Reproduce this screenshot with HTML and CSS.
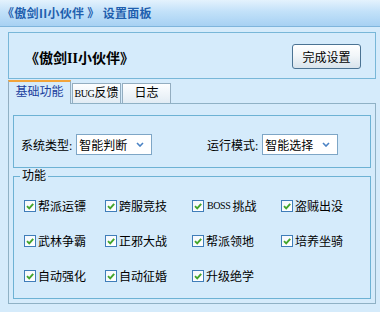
FILE: index.html
```html
<!DOCTYPE html>
<html lang="zh">
<head>
<meta charset="utf-8">
<title>设置面板</title>
<link rel="stylesheet" href="styles.css">
</head>
<body>
<div class="titlebar">《傲剑II小伙伴 》 设置面板</div>
<div class="main">
  <div class="header">
    <div class="brand">《傲剑II小伙伴》</div>
    <button class="btn">完成设置</button>
  </div>
  <div class="tabs">
    <div class="tab active">基础功能</div>
    <div class="tab"><span class="en">BUG</span>反馈</div>
    <div class="tab">日志</div>
  </div>
  <div class="pane">
    <div class="group">
      <div class="field first">
        <span class="label">系统类型:</span>
        <div class="select"><span>智能判断</span><svg class="chev" viewBox="0 0 8 5" width="8" height="5"><path d="M1 1L4 4L7 1" fill="none" stroke="#4a82c4" stroke-width="1.6"/></svg></div>
      </div>
      <div class="field">
        <span class="label">运行模式:</span>
        <div class="select"><span>智能选择</span><svg class="chev" viewBox="0 0 8 5" width="8" height="5"><path d="M1 1L4 4L7 1" fill="none" stroke="#4a82c4" stroke-width="1.6"/></svg></div>
      </div>
    </div>
    <fieldset class="features">
      <legend>功能</legend>
      <div class="grid">
        <label class="cb"><span class="box"><svg viewBox="0 0 10 10" width="10" height="10"><path d="M2 5.2L4.2 7.4L8.2 2.8" fill="none" stroke="#43a52c" stroke-width="1.9"/></svg></span>帮派运镖</label>
        <label class="cb"><span class="box"><svg viewBox="0 0 10 10" width="10" height="10"><path d="M2 5.2L4.2 7.4L8.2 2.8" fill="none" stroke="#43a52c" stroke-width="1.9"/></svg></span>跨服竞技</label>
        <label class="cb"><span class="box"><svg viewBox="0 0 10 10" width="10" height="10"><path d="M2 5.2L4.2 7.4L8.2 2.8" fill="none" stroke="#43a52c" stroke-width="1.9"/></svg></span><span class="en">BOSS</span>挑战</label>
        <label class="cb"><span class="box"><svg viewBox="0 0 10 10" width="10" height="10"><path d="M2 5.2L4.2 7.4L8.2 2.8" fill="none" stroke="#43a52c" stroke-width="1.9"/></svg></span>盗贼出没</label>
        <label class="cb"><span class="box"><svg viewBox="0 0 10 10" width="10" height="10"><path d="M2 5.2L4.2 7.4L8.2 2.8" fill="none" stroke="#43a52c" stroke-width="1.9"/></svg></span>武林争霸</label>
        <label class="cb"><span class="box"><svg viewBox="0 0 10 10" width="10" height="10"><path d="M2 5.2L4.2 7.4L8.2 2.8" fill="none" stroke="#43a52c" stroke-width="1.9"/></svg></span>正邪大战</label>
        <label class="cb"><span class="box"><svg viewBox="0 0 10 10" width="10" height="10"><path d="M2 5.2L4.2 7.4L8.2 2.8" fill="none" stroke="#43a52c" stroke-width="1.9"/></svg></span>帮派领地</label>
        <label class="cb"><span class="box"><svg viewBox="0 0 10 10" width="10" height="10"><path d="M2 5.2L4.2 7.4L8.2 2.8" fill="none" stroke="#43a52c" stroke-width="1.9"/></svg></span>培养坐骑</label>
        <label class="cb"><span class="box"><svg viewBox="0 0 10 10" width="10" height="10"><path d="M2 5.2L4.2 7.4L8.2 2.8" fill="none" stroke="#43a52c" stroke-width="1.9"/></svg></span>自动强化</label>
        <label class="cb"><span class="box"><svg viewBox="0 0 10 10" width="10" height="10"><path d="M2 5.2L4.2 7.4L8.2 2.8" fill="none" stroke="#43a52c" stroke-width="1.9"/></svg></span>自动征婚</label>
        <label class="cb"><span class="box"><svg viewBox="0 0 10 10" width="10" height="10"><path d="M2 5.2L4.2 7.4L8.2 2.8" fill="none" stroke="#43a52c" stroke-width="1.9"/></svg></span>升级绝学</label>
      </div>
    </fieldset>
  </div>
</div>
</body>
</html>
```
FILE: styles.css
```css
* { box-sizing: border-box; }
body {
  margin: 0;
  width: 380px;
  height: 312px;
  overflow: hidden;
  background: #d5ebfb;
  font-family: "Liberation Serif", "Noto Sans CJK SC", serif;
  font-size: 12px;
  color: #000;
}
.titlebar {
  height: 27px;
  line-height: 26px;
  padding-left: 2px;
  border-bottom: 1px solid #7fb5dc;
  background: linear-gradient(#e4f2fd, #c2e1f9 45%, #a7d1f3);
  color: #1f5fae;
  font-weight: bold;
  font-family: "Noto Sans CJK SC", sans-serif;
  letter-spacing: 0.3px;
}
.main { padding: 5px 4px 0 8px; }
.header {
  height: 47px;
  border: 1px solid #78b7d8;
  display: flex;
  align-items: center;
  justify-content: space-between;
  padding: 0 14px 0 16px;
}
.brand {
  font-size: 14px;
  font-weight: bold;
  padding-top: 3px;
}
.btn {
  width: 69px;
  height: 25px;
  padding: 0;
  margin-top: 2px;
  border: 1px solid #4b7393;
  border-radius: 3px;
  background: linear-gradient(#ffffff, #f2f6f9 45%, #d8e3ec);
  font: 12px "Noto Sans CJK SC", sans-serif;
  color: #000;
}
.tabs {
  display: flex;
  align-items: flex-end;
  gap: 1px;
  height: 23px;
  margin-top: 1px;
  position: relative;
  z-index: 1;
}
.tab {
  width: 49px;
  height: 20px;
  border: 1px solid #93adc0;
  border-bottom: none;
  background: linear-gradient(#fdfeff, #e2ecf4);
  text-align: center;
  line-height: 19px;
  white-space: nowrap;
}
.tab.active {
  width: 63px;
  height: 24px;
  margin-bottom: -1px;
  border-top: 2px solid #f2a43a;
  background: #d5ebfb;
  color: #1b3f9e;
  line-height: 21px;
}
.en {
  font-size: 10px;
  letter-spacing: -0.4px;
}
.pane {
  border: 1px solid #8fb1c5;
  padding: 11px 4px 4px 4px;
}
.group {
  height: 53px;
  border: 1px solid #6db2d4;
  display: flex;
  align-items: center;
  padding: 6px 0 0 7px;
}
.field { display: flex; align-items: center; }
.field.first { width: 186px; }
.label { margin-right: 4px; }
.select {
  width: 76px;
  height: 21px;
  border: 1px solid #7ea6c6;
  background: #fff;
  display: flex;
  align-items: center;
  justify-content: space-between;
  padding: 0 7px 0 2px;
}
.chev { display: block; }
.features {
  margin: 0;
  padding: 0 0 5px 0;
  border: 1px solid #6db2d4;
  min-width: 0;
}
.features legend {
  padding: 0 2px;
  margin-left: 6px;
  line-height: 16px;
}
.grid {
  display: grid;
  grid-template-columns: 81px 87px 89px 1fr;
  grid-auto-rows: 35px;
  align-items: center;
  padding: 4px 0 0 10px;
}
.cb { display: flex; align-items: center; gap: 2px; white-space: nowrap; }
.cb .en { margin-left: 1px; }
.box {
  width: 12px;
  height: 12px;
  border: 1px solid #3f7db9;
  background: linear-gradient(135deg, #f4f8fc, #ffffff);
  display: flex;
  align-items: center;
  justify-content: center;
}
.box svg { display: block; }
```
